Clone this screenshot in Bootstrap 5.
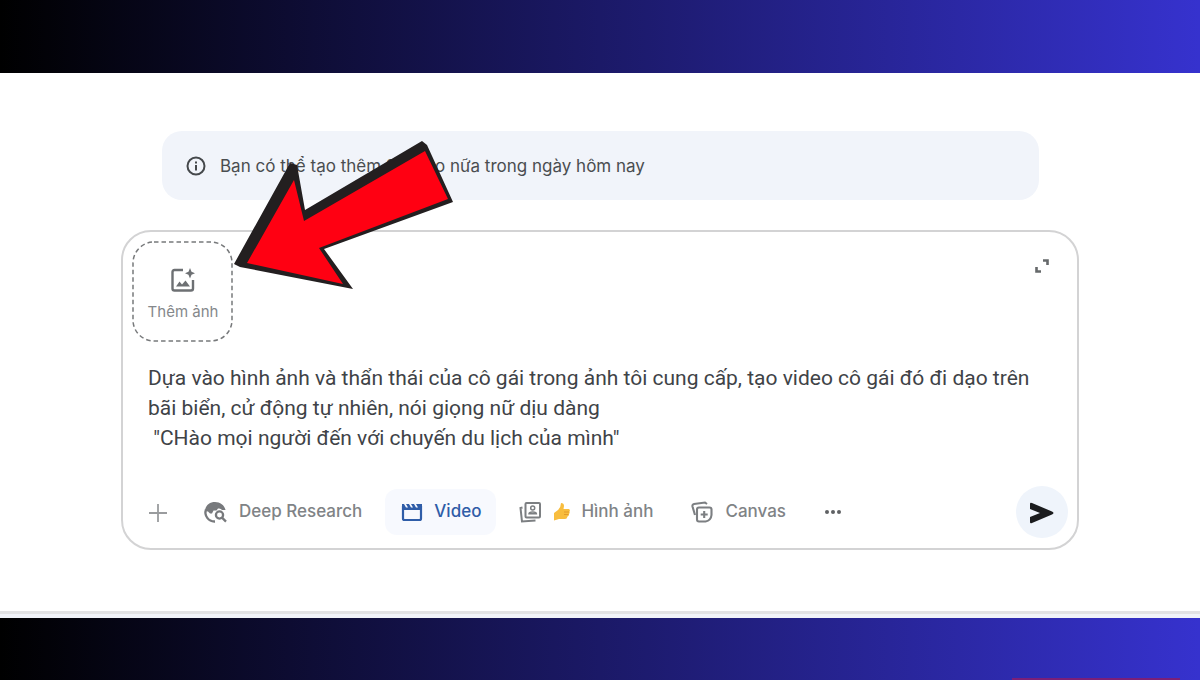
<!DOCTYPE html>
<html lang="vi">
<head>
<meta charset="utf-8">
<meta name="viewport" content="width=device-width, initial-scale=1">
<title>Tạo video</title>
<link href="https://cdn.jsdelivr.net/npm/bootstrap@5.3.0/dist/css/bootstrap.min.css" rel="stylesheet">
<style>
  body { font-family: Inter, Roboto, "Liberation Sans", sans-serif; background: #fff; }
  .band { height: 73px; background: linear-gradient(90deg, #000 0%, #3632ce 100%); }
  .band-bottom { height: 62px; border: 0; }
  .band-mark { width: 168px; height: 2px; margin-right: 20px; background: #7a1f78; }
  .page-edge { height: 7px; background: #f1f3f9; border-top: 3px solid #e2e2e4; }
  .stage { max-width: 958px; margin-top: 58px; }
  .notice { margin: 0 40px 30px 41px; height: 69px; padding: 2px 24px 0; border-radius: 20px; background: #f1f4fa; color: #4a4d50; font-size: 17px; }
  .composer { border: 2px solid #d3d3d4; border-radius: 30px; height: 320px; padding: 9px; background: #fff; }
  .add-photo { width: 102px; height: 102px; color: #85888b; font-size: 15px; background: none; border: 0; padding: 6px 0 0; }
  .add-photo .dashes { position: absolute; inset: 0; width: 100%; height: 100%; }
  .expand { margin: 15px 18px 0 0; line-height: 1; }
  .prompt { color: #404347; font-family: Roboto, "Liberation Sans", sans-serif; font-size: 21px; line-height: 30px; padding: 0 16px; margin-top: 20px; height: 92px; resize: none; overflow: hidden; }
  .prompt:focus { color: #404347; }
  .tool { color: #808386; font-size: 17px; font-weight: 500; height: 46px; padding: 0 15px; gap: 10px; border: 0; background: none; }
  .tool-plus { padding: 0; margin: 0 12px 0 16px; }
  .tool-active { color: #2f5da8; background: #f7f9fe; border-radius: 12px; }
  .send { width: 52px; height: 52px; border-radius: 50%; border: 0; background: #eff4fb; padding: 0; }
  .tools { margin-top: 31px; }
  .pointer { position: absolute; left: 110px; top: 8px; pointer-events: none; }
</style>
</head>
<body class="d-flex flex-column min-vh-100">
<header class="band flex-shrink-0"></header>

<main class="flex-grow-1">
  <div class="stage mx-auto position-relative">
    <div class="notice d-flex align-items-center" role="status">
      <svg class="flex-shrink-0 me-3" width="18" height="20" viewBox="0 0 18 20" fill="none" overflow="visible" stroke="#45484b" stroke-width="2" aria-hidden="true"><circle cx="10" cy="9" r="8.5"/><path d="M10 8v5.5M10 4.500v2"/></svg>
      <span>Bạn có thể tạo thêm 2 video nữa trong ngày hôm nay</span>
    </div>

    <form class="composer d-flex flex-column">
      <div class="d-flex justify-content-between align-items-start">
        <button type="button" class="add-photo position-relative d-flex flex-column align-items-center justify-content-center">
          <svg class="dashes" viewBox="0 0 102 102" fill="none" stroke="#77797b" stroke-width="1.5" stroke-dasharray="4.500 3" aria-hidden="true"><rect x="1" y="1" width="99" height="99" rx="21"/></svg>
          <svg class="mb-2" width="26" height="26" viewBox="0 0 26 26" fill="none" stroke="#6d7073" stroke-width="2.4" aria-hidden="true"><path d="M13 3H4.500Q2.500 3 2.500 5V21.500Q2.500 23.500 4.500 23.500H21Q23 23.500 23 21.500V13"/><path d="M6 19.500 9.500 14.500 12 17.500 15.500 13.500 20 19.500Z" fill="#6d7073" stroke="none"/><path d="M20 1 21.500 4.800 25 6.200 21.500 7.700 20 11.500 18.500 7.700 15 6.200 18.500 4.800Z" fill="#6d7073" stroke="none"/></svg>
          <span>Thêm ảnh</span>
        </button>
        <button type="button" class="expand btn p-0 border-0" aria-label="Mở rộng">
          <svg width="16" height="16" viewBox="0 0 16 16" fill="none" stroke="#66696b" stroke-width="2.6"><path d="M9 2.500H13.500V7M2.500 9V13.500H7"/></svg>
        </button>
      </div>

      <textarea class="prompt form-control border-0 shadow-none bg-transparent" aria-label="Câu lệnh">Dựa vào hình ảnh và thẩn thái của cô gái trong ảnh tôi cung cấp, tạo video cô gái đó đi dạo trên bãi biển, cử động tự nhiên, nói giọng nữ dịu dàng
 "CHào mọi người đến với chuyến du lịch của mình"</textarea>

      <div class="tools d-flex align-items-center">
        <div class="d-flex align-items-center gap-2">
        <button type="button" class="tool tool-plus" aria-label="Thêm tệp"><svg width="20" height="20" viewBox="0 0 20 20" stroke="#9a9c9e" stroke-width="1.8"><path d="M10 1V19M1 10H19"/></svg></button>
        <button type="button" class="tool d-flex align-items-center">
          <svg width="26" height="24" viewBox="0 0 26 24" fill="none" stroke="#77797c" stroke-width="2.300" aria-hidden="true"><path d="M3 9.500A9 9 0 0 0 12 21.500"/><path d="M2 11C2.500 5 7 2 12 2S21.500 5 22.500 10H19Q18 8 15 8.500L13.500 10.500H10.500L9 13.500H7L5 11.500Z" fill="#77797c" stroke="none"/><circle cx="16.500" cy="15" r="3.600"/><path d="M19 17.600 23 21.600"/></svg>
          <span>Deep Research</span>
        </button>
        <button type="button" class="tool tool-active d-flex align-items-center" aria-pressed="true">
          <svg width="24" height="22" viewBox="0 0 24 22" aria-hidden="true"><path d="M3 5V17.500Q3 19 4.500 19H19.500Q21 19 21 17.500V5" fill="none" stroke="#2f5da8" stroke-width="2.200"/><path d="M2 3H4L6 6.500H8L6 3H9L11 6.500H13L11 3H14L16 6.500H18L16 3H22V9H2Z" fill="#2f5da8"/></svg>
          <span>Video</span>
        </button>
        <button type="button" class="tool d-flex align-items-center">
          <svg width="24" height="24" viewBox="1 0 24 24" fill="none" stroke="#7c7f82" stroke-width="2" aria-hidden="true"><rect x="7.500" y="3" width="14.500" height="14.500" rx="1"/><path d="M4.500 7.500 2.500 8 4 21.500 17.500 20.500"/><circle cx="14.700" cy="8" r="2" stroke-width="1.500"/><path d="M11 13.800Q11 12 14.700 12T18.400 13.800Z" stroke-width="1.500"/></svg>
          <svg width="18" height="20" viewBox="0 0 18 20" aria-hidden="true"><path d="M8 1Q11 1 11 4L10.500 7H16Q17.500 8 16.500 9.500 17 11 16 12 16 14 14.500 14.500 14 17 12 17H6L1 18.500V11L5 8Q8 5 8 1Z" fill="#f8bd3e"/><path d="M11 10H16M11 12.500H15.500" stroke="#e29b2b"/></svg>
          <span>Hình ảnh</span>
        </button>
        <button type="button" class="tool d-flex align-items-center">
          <svg width="24" height="24" viewBox="1 0 24 24" fill="none" stroke="#7c7f82" stroke-width="2.100" aria-hidden="true"><path d="M5 15 2.500 6.500Q2 4.500 4 4L15 2.500 17 4"/><path d="M9 7.500H19.500Q21.500 7.500 21.500 9.500V15Q21 20.500 15.500 21.500H9Q7 21.500 7 19.500V9.500Q7 7.500 9 7.500Z"/><path d="M14.200 11V18M10.700 14.500H17.700"/></svg>
          <span>Canvas</span>
        </button>
        <button type="button" class="tool d-flex align-items-center" aria-label="Thêm công cụ"><svg width="18" height="6" viewBox="0 0 18 6" fill="#5f6164"><circle cx="3" cy="3" r="2"/><circle cx="9" cy="3" r="2"/><circle cx="15" cy="3" r="2"/></svg></button>
        </div>
        <button type="submit" class="send ms-auto" aria-label="Gửi"><svg width="26" height="22" viewBox="0 0 26 22" fill="#1b1c1e"><path d="M1 2Q1 0 3 1L23 9.500Q26 11 23 12.500L3 21Q1 22 1 20V15L11 11 1 7Z"/></svg></button>
      </div>
    </form>

    <svg class="pointer" width="226" height="150" viewBox="231 139 226 150" aria-hidden="true">
      <path d="M234 264 290 163 297 165 305 210 422 141 427 145 453 202 324 249 353 289 240 267Z" fill="#231f20"/>
      <path d="M247 263 294 180 304 221 425 151 448 199 319 248 343 284Z" fill="#ff0012"/>
    </svg>
  </div>
</main>

<div class="page-edge"></div>
<footer class="band band-bottom d-flex justify-content-end align-items-end"><div class="band-mark"></div></footer>
<script src="https://cdn.jsdelivr.net/npm/bootstrap@5.3.0/dist/js/bootstrap.bundle.min.js"></script>
</body>
</html>
